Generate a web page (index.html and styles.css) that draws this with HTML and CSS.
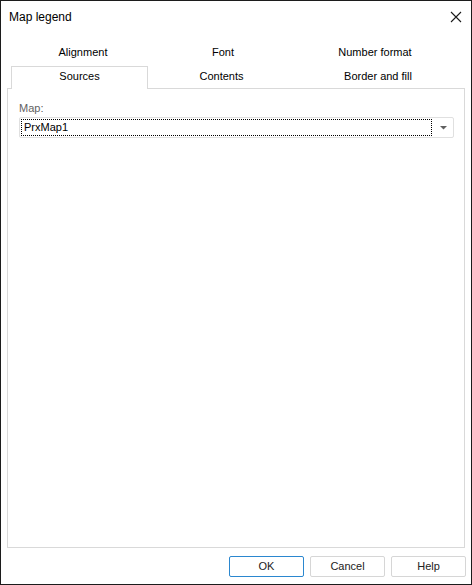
FILE: index.html
```html
<!DOCTYPE html>
<html>
<head>
<meta charset="utf-8">
<link rel="stylesheet" href="styles.css">
</head>
<body>
<div class="window">
  <div class="titlebar">
    <span class="title">Map legend</span>
    <svg class="close" width="12" height="12" viewBox="0 0 12 12"><path d="M1 1 L11 11 M11 1 L1 11" stroke="#1a1a1a" stroke-width="1.1" fill="none"/></svg>
  </div>
  <div class="tabs">
    <div class="tabrow row1">
      <div class="tab w1">Alignment</div>
      <div class="tab w2">Font</div>
      <div class="tab w3">Number format</div>
    </div>
    <div class="tabrow row2">
      <div class="tab sel">Sources</div>
      <div class="tab w5">Contents</div>
      <div class="tab w6">Border and fill</div>
    </div>
  </div>
  <div class="panel">
    <div class="label">Map:</div>
    <div class="combo">
      <div class="combo-text">PrxMap1</div>
      <svg class="arrow" width="7" height="4" viewBox="0 0 7 4"><path d="M0 0 H7 L3.5 3.5 Z" fill="#606060"/></svg>
    </div>
  </div>
  <div class="buttons">
    <div class="btn default">OK</div>
    <div class="btn">Cancel</div>
    <div class="btn">Help</div>
  </div>
</div>
</body>
</html>
```
FILE: styles.css
```css
html, body {
  margin: 0;
  padding: 0;
  background: #ffffff;
}
.window {
  box-sizing: border-box;
  width: 472px;
  height: 585px;
  border: 1px solid #1c1c1c;
  background: #ffffff;
  display: flex;
  flex-direction: column;
  font-family: "Liberation Sans", Arial, sans-serif;
  color: #000;
}
.titlebar {
  height: 31px;
  display: flex;
  align-items: center;
  justify-content: space-between;
  padding: 0 9px 0 8px;
  flex: none;
}
.title {
  font-size: 12px;
  color: #000;
}
.close {
  display: block;
}
.tabs {
  margin-top: 10px;
  flex: none;
}
.tabrow {
  display: flex;
  font-size: 11px;
}
.row1 {
  padding-left: 12px;
  height: 24px;
}
.row2 {
  padding-left: 10px;
  height: 22px;
}
.tab {
  box-sizing: border-box;
  text-align: center;
  line-height: 20px;
}
.w1 { width: 140px; }
.w2 { width: 140px; }
.w3 { width: 164px; }
.sel {
  width: 137px;
  height: 23px;
  border: 1px solid #d9d9d9;
  border-bottom: none;
  background: #fff;
  position: relative;
  z-index: 1;
  line-height: 19px;
}
.w5 { width: 147px; }
.w6 { width: 166px; }
.panel {
  box-sizing: border-box;
  margin-left: 6px;
  width: 458px;
  height: 460px;
  border: 1px solid #d9d9d9;
  padding: 11px 10px 0 11px;
  flex: none;
}
.label {
  font-size: 11px;
  color: #626262;
  line-height: 16px;
  height: 17px;
}
.combo {
  box-sizing: border-box;
  width: 435px;
  height: 21px;
  border: 1px solid #e0e0e0;
  border-radius: 2px;
  display: flex;
  align-items: center;
  padding: 1px;
}
.combo-text {
  box-sizing: border-box;
  width: 411px;
  height: 17px;
  border: 1px dotted #000;
  font-size: 11px;
  line-height: 15px;
  padding-left: 2px;
}
.arrow {
  display: block;
  margin-left: 8px;
}
.buttons {
  display: flex;
  justify-content: flex-end;
  gap: 6px;
  padding: 8px 5px 0 0;
}
.btn {
  box-sizing: border-box;
  width: 75px;
  height: 21px;
  border: 1px solid #d6d6d6;
  border-radius: 2px;
  font-size: 11px;
  text-align: center;
  line-height: 19px;
  color: #222;
}
.btn.default {
  border-color: #2b87cf;
}
```
